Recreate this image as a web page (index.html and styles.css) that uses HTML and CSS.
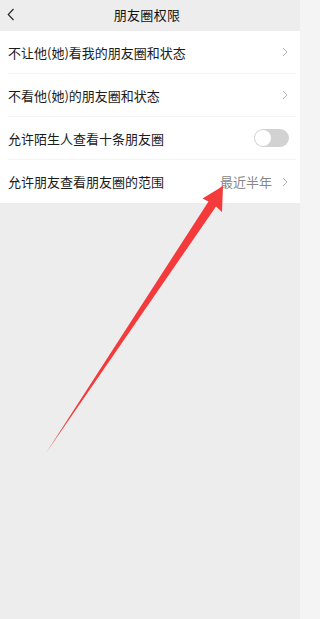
FILE: index.html
```html
<!DOCTYPE html>
<html lang="zh-CN">
<head>
<meta charset="utf-8">
<link rel="stylesheet" href="styles.css">
</head>
<body>
<div class="app">
  <header class="topbar">
    <svg class="back" width="8" height="13" viewBox="0 0 8 13"><path d="M6.5 1 L1.2 6.5 L6.5 12" fill="none" stroke="#222" stroke-width="1.1"/></svg>
    <div class="title">朋友圈权限</div>
  </header>
  <section class="list">
    <div class="row">
      <span class="label">不让他(她)看我的朋友圈和状态</span>
      <svg class="chev" width="6" height="10" viewBox="0 0 6 10"><path d="M1 1 L5 5 L1 9" fill="none" stroke="#b4b4b4" stroke-width="1"/></svg>
    </div>
    <div class="row">
      <span class="label">不看他(她)的朋友圈和状态</span>
      <svg class="chev" width="6" height="10" viewBox="0 0 6 10"><path d="M1 1 L5 5 L1 9" fill="none" stroke="#b4b4b4" stroke-width="1"/></svg>
    </div>
    <div class="row">
      <span class="label">允许陌生人查看十条朋友圈</span>
      <span class="toggle"><span class="knob"></span></span>
    </div>
    <div class="row last">
      <span class="label">允许朋友查看朋友圈的范围</span>
      <span class="value">最近半年</span>
      <svg class="chev" width="6" height="10" viewBox="0 0 6 10"><path d="M1 1 L5 5 L1 9" fill="none" stroke="#b4b4b4" stroke-width="1"/></svg>
    </div>
  </section>
  <svg class="arrow" width="304" height="619" viewBox="0 0 304 619">
    <polygon points="46,453 208.5,201.5 202.5,198.5 223,186 222,212 216,206.5" fill="#f43a3a"/>
  </svg>
</div>
</body>
</html>
```

FILE: styles.css
```css
html, body {
  margin: 0;
  padding: 0;
}
body {
  background: #f4f4f4;
  font-family: "Noto Sans CJK SC", "Noto Sans", sans-serif;
  color: #1b1b1b;
}
.app {
  position: relative;
  width: 300px;
  height: 619px;
  background: #ededed;
}
.topbar {
  height: 31px;
  display: flex;
  align-items: center;
  position: relative;
}
.back {
  margin-left: 7px;
  margin-top: -2px;
}
.title {
  flex: 1;
  text-align: center;
  font-size: 13px;
  font-weight: 400;
  color: #111111;
  margin-right: 21px;
  margin-top: -2px;
  letter-spacing: 0.3px;
}
.list {
  background: #ffffff;
}
.row {
  height: 42px;
  margin-left: 8px;
  margin-right: 4px;
  padding-right: 8px;
  display: flex;
  align-items: center;
  border-bottom: 1px solid #f3f3f3;
}
.row.last {
  border-bottom: none;
  height: 43px;
}
.label {
  flex: 1;
  font-size: 13px;
  line-height: 1;
  color: #1b1b1b;
}
.value {
  font-size: 13px;
  line-height: 1;
  color: #888888;
  margin-right: 10px;
}
.chev {
  display: block;
}
.toggle {
  width: 35px;
  height: 18px;
  border-radius: 9px;
  background: #d2d2d2;
  display: flex;
  align-items: center;
  padding-left: 1px;
  box-sizing: border-box;
  margin-right: -1px;
}
.knob {
  width: 16px;
  height: 16px;
  border-radius: 50%;
  background: #ffffff;
}
.arrow {
  position: absolute;
  left: 0;
  top: 0;
  pointer-events: none;
}
```
